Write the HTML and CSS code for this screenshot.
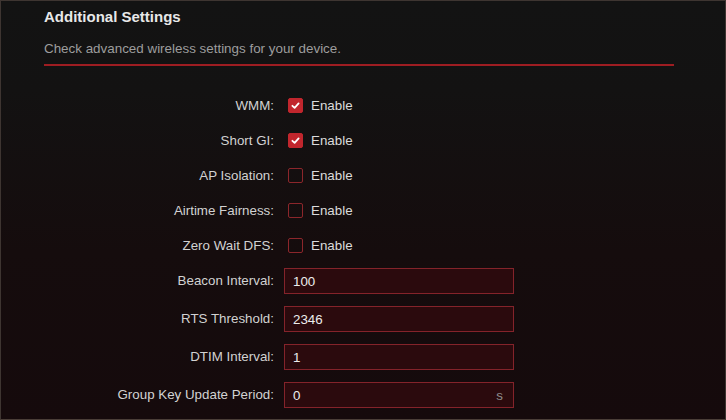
FILE: index.html
```html
<!DOCTYPE html>
<html>
<head>
<meta charset="utf-8">
<link rel="stylesheet" href="styles.css">
</head>
<body>
<div class="frame">
  <div class="section-head">
    <h2 class="title">Additional Settings</h2>
    <p class="desc">Check advanced wireless settings for your device.</p>
  </div>
  <div class="form">
    <div class="row check-row">
      <span class="label">WMM:</span>
      <span class="control"><span class="box checked"><svg viewBox="0 0 15 15" width="15" height="15"><path d="M4.4 7.8 L6.6 9.8 L10.6 5.4" fill="none" stroke="#fff" stroke-width="1.8" stroke-linecap="round" stroke-linejoin="round"/></svg></span><span class="opt">Enable</span></span>
    </div>
    <div class="row check-row">
      <span class="label">Short GI:</span>
      <span class="control"><span class="box checked"><svg viewBox="0 0 15 15" width="15" height="15"><path d="M4.4 7.8 L6.6 9.8 L10.6 5.4" fill="none" stroke="#fff" stroke-width="1.8" stroke-linecap="round" stroke-linejoin="round"/></svg></span><span class="opt">Enable</span></span>
    </div>
    <div class="row check-row">
      <span class="label">AP Isolation:</span>
      <span class="control"><span class="box"></span><span class="opt">Enable</span></span>
    </div>
    <div class="row check-row">
      <span class="label">Airtime Fairness:</span>
      <span class="control"><span class="box"></span><span class="opt">Enable</span></span>
    </div>
    <div class="row check-row">
      <span class="label">Zero Wait DFS:</span>
      <span class="control"><span class="box"></span><span class="opt">Enable</span></span>
    </div>
    <div class="inputs">
      <div class="row">
        <span class="label">Beacon Interval:</span>
        <span class="field"><span class="val">100</span></span>
      </div>
      <div class="row">
        <span class="label">RTS Threshold:</span>
        <span class="field"><span class="val">2346</span></span>
      </div>
      <div class="row">
        <span class="label">DTIM Interval:</span>
        <span class="field"><span class="val">1</span></span>
      </div>
      <div class="row">
        <span class="label">Group Key Update Period:</span>
        <span class="field"><span class="val">0</span><span class="unit">s</span></span>
      </div>
    </div>
  </div>
</div>
</body>
</html>
```
FILE: styles.css
```css
* { box-sizing: border-box; }
html, body { margin: 0; padding: 0; }
body {
  width: 726px;
  height: 420px;
  overflow: hidden;
  font-family: "Liberation Sans", Arial, sans-serif;
  background: #121212;
}
.frame {
  width: 726px;
  height: 420px;
  border: 1px solid #3e3531;
  border-bottom-color: #4a3e38;
  background: linear-gradient(to bottom, #131313 0px, #131212 90px, #150c0d 250px, #150a0c 420px);
  padding: 7px 51px 0 43px;
}
.section-head {
  border-bottom: 2px solid #9e1d22;
  padding-bottom: 7px;
}
.title {
  margin: 0;
  font-size: 15px;
  line-height: 18px;
  font-weight: bold;
  color: #e8e8e8;
}
.desc {
  margin: 15px 0 0;
  font-size: 13.4px;
  line-height: 16px;
  color: #9d9d9d;
}
.form {
  padding-top: 32px;
  display: flex;
  flex-direction: column;
  gap: 20px;
}
.row {
  display: flex;
  align-items: center;
  gap: 10px;
  font-size: 13.35px;
  color: #d2d2d2;
}
.check-row { height: 15px; }
.label {
  width: 230px;
  text-align: right;
  line-height: 16px;
}
.control {
  display: flex;
  align-items: center;
  padding-left: 4px;
}
.box {
  width: 15px;
  height: 15px;
  border: 1px solid #8c262b;
  border-radius: 2px;
  display: block;
  position: relative;
}
.box.checked {
  background: #c1262d;
  border-color: #c1262d;
}
.box svg {
  position: absolute;
  left: -1px;
  top: -1px;
}
.opt {
  margin-left: 8px;
  color: #dcdcdc;
  line-height: 16px;
}
.inputs {
  margin-top: -5px;
  display: flex;
  flex-direction: column;
  gap: 12px;
}
.field {
  width: 230px;
  height: 26px;
  border: 1px solid #84232a;
  background: #2b0a0d;
  display: flex;
  align-items: center;
  justify-content: space-between;
  padding: 0 10px 0 8px;
  color: #ececec;
}
.unit { color: #8e8e8e; }
```
